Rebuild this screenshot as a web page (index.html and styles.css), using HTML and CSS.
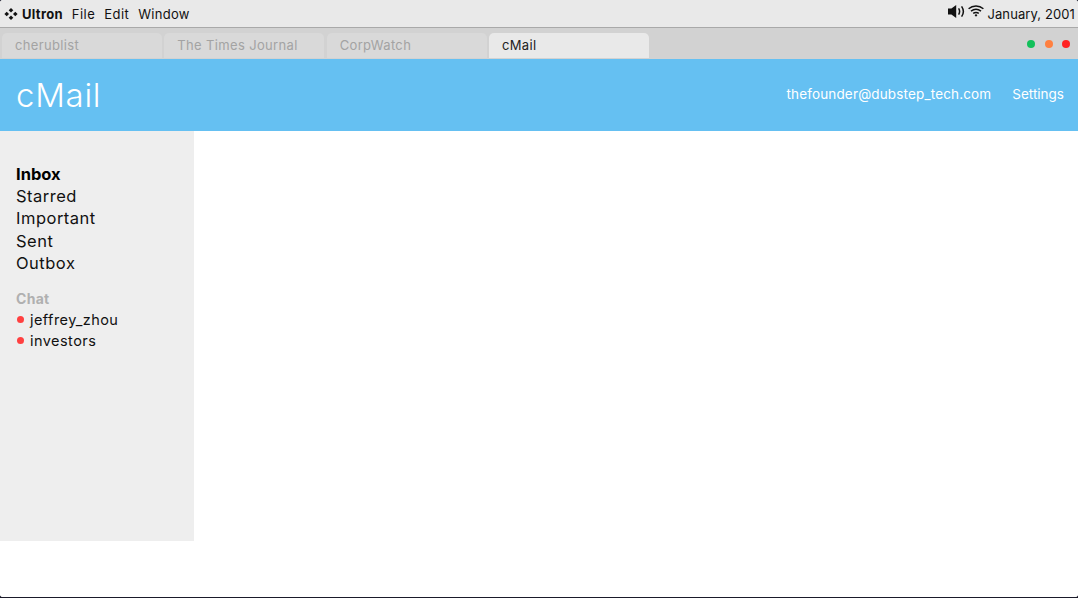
FILE: index.html
```html
<!DOCTYPE html>
<html lang="en">
<head>
<meta charset="utf-8">
<title>cMail</title>
<link rel="stylesheet" href="styles.css">
</head>
<body>
<div class="screen">
  <header class="menubar">
    <div class="menu-left">
      <svg class="logo" width="14" height="14" viewBox="0 0 14 14"><g fill="#111"><path d="M7 1 9.3 3.3 7 5.6 4.7 3.3Z"/><path d="M2.7 4.7 5 7 2.7 9.3.4 7Z"/><path d="M11.3 4.7 13.6 7 11.3 9.3 9 7Z"/><path d="M7 8.4 9.3 10.7 7 13 4.7 10.7Z"/></g></svg>
      <span class="brand">Ultron</span>
      <span class="menu-item">File</span>
      <span class="menu-item">Edit</span>
      <span class="menu-item menu-wide">Window</span>
    </div>
    <div class="menu-right">
      <svg class="ico-sound" width="17" height="13" viewBox="0 0 17 13"><path fill="#111" d="M0 3.6h3.4L8.2 0v13L3.4 9.4H0Z"/><path fill="none" stroke="#111" stroke-width="1.5" d="M10.6 3.4c1.3 2 1.3 4.2 0 6.2M13.6 1.3c2.2 3.2 2.2 7.2 0 10.4"/></svg>
      <svg class="ico-wifi" width="16" height="12" viewBox="0 0 16 12"><g fill="none" stroke="#111" stroke-width="1.5"><path d="M.6 3.8C4.8.1 11.2.1 15.4 3.8"/><path d="M3 6.2C6 3.8 10 3.8 13 6.2"/><path d="M5.2 8.4C6.9 7.2 9.1 7.2 10.8 8.4"/></g><path fill="#111" d="M6.6 10.2 8 9l1.4 1.2L8 11.8Z"/></svg>
      <span class="clock">January, 2001</span>
    </div>
  </header>
  <nav class="tabbar">
    <div class="tabs">
      <div class="tab">cherublist</div>
      <div class="tab">The Times Journal</div>
      <div class="tab">CorpWatch</div>
      <div class="tab tab-active">cMail</div>
    </div>
    <div class="lights">
      <span class="light light-green"></span>
      <span class="light light-orange"></span>
      <span class="light light-red"></span>
    </div>
  </nav>
  <div class="app-header">
    <h1 class="app-title">cMail</h1>
    <div class="app-links">
      <span class="app-email">thefounder@dubstep_tech.com</span>
      <span>Settings</span>
    </div>
  </div>
  <div class="app-body">
    <aside class="sidebar">
      <ul class="folders">
        <li class="folder-active">Inbox</li>
        <li>Starred</li>
        <li>Important</li>
        <li>Sent</li>
        <li>Outbox</li>
      </ul>
      <div class="chat-title">Chat</div>
      <ul class="chats">
        <li><span class="dot"></span>jeffrey_zhou</li>
        <li><span class="dot"></span>investors</li>
      </ul>
    </aside>
    <main class="content"></main>
  </div>
  <div class="bottom-space"></div>
</div>
</body>
</html>
```
FILE: styles.css
```css
* { box-sizing: border-box; }
html, body { margin: 0; height: 100%; background: #1a1a2a; overflow: hidden; }
body { font-family: Inter, "Noto Sans", sans-serif; color: #111; }
.screen {
  width: 1078px; height: 597px; background: #fff;
  display: flex; flex-direction: column;
  border-radius: 3px; overflow: hidden;
}
.menubar {
  height: 28px; flex: none; background: #e9e9e9;
  border-bottom: 1px solid #a9a9a9;
  display: flex; justify-content: space-between; align-items: center;
  padding: 0 3px 0 4px; font-size: 13px;
}
.menu-left { display: flex; align-items: center; }
.logo { margin-right: 4px; }
.brand { font-weight: 700; margin-right: 9px; font-size: 13px; letter-spacing: .3px; }
.menu-item { margin-right: 9px; letter-spacing: .45px; }
.menu-wide { letter-spacing: .3px; }
.menu-right { display: flex; align-items: center; }
.ico-sound { margin: -4px 3px 0 0; }
.ico-wifi { margin: -5px 3px 0 0; }
.clock { letter-spacing: .1px; }
.tabbar {
  height: 31px; flex: none; background: #d2d2d2;
  display: flex; justify-content: space-between;
  padding: 5px 8px 0 2px;
}
.tabs { display: flex; gap: 2.33px; }
.tab {
  width: 160px; height: 25px; background: #d9d9d9; color: #a3a3a3;
  border-radius: 5px 5px 0 0; padding: 0 13px;
  font-size: 13px; line-height: 25px; letter-spacing: .35px;
}
.tab-active { background: #e9e9e9; color: #222; }
.lights { display: flex; gap: 9.5px; padding-top: 6px; }
.light { width: 8px; height: 8px; border-radius: 50%; margin-top: 1px; }
.light-green { background: #12c05a; }
.light-orange { background: #ff8040; }
.light-red { background: #ff2222; }
.app-header {
  height: 72px; flex: none; background: #65c0f2; color: #fff;
  display: flex; justify-content: space-between; align-items: center;
  padding: 0 14px 0 16px;
}
.app-title { margin: 0; font-size: 33px; font-weight: 300; letter-spacing: .7px; }
.app-links { display: flex; gap: 21px; font-size: 13.5px; margin-top: -2px; }
.app-email { letter-spacing: .15px; }
.app-body { height: 410px; flex: none; display: flex; }
.sidebar {
  width: 194px; flex: none; background: #eeeeee;
  padding: 32px 16px 0;
}
.folders, .chats { list-style: none; margin: 0; padding: 0; }
.folders li { font-size: 16.5px; line-height: 22.2px; color: #111; letter-spacing: .5px; }
.folders .folder-active { font-weight: 700; color: #000; letter-spacing: 0; }
.chat-title { margin-top: 13.5px; font-size: 14px; line-height: 21px; font-weight: 700; color: #b0b0b0; letter-spacing: .3px; }
.chats li { font-size: 14.5px; line-height: 21px; display: flex; align-items: center; letter-spacing: .45px; }
.dot { width: 7px; height: 7px; border-radius: 50%; background: #ff4040; margin: 1px 6px 0 1px; }
.content { flex: 1; background: #fff; }
.bottom-space { flex: 1; background: #fff; }
```
